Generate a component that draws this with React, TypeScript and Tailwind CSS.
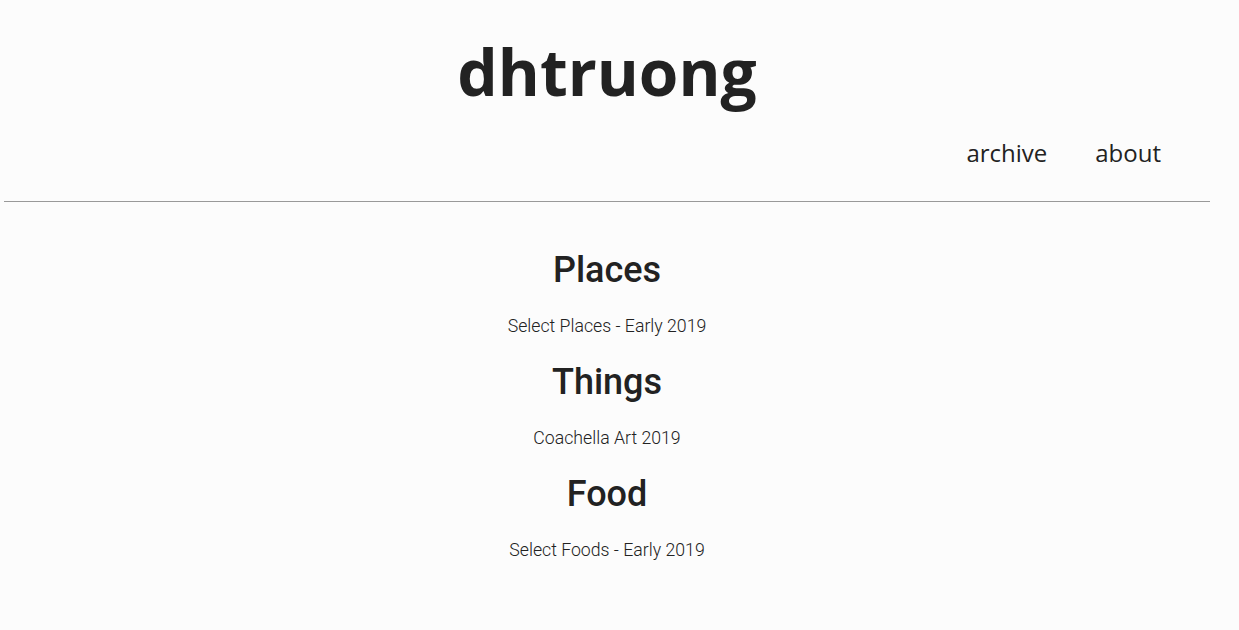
const sections = [
  { title: 'Places', sub: 'Select Places - Early 2019' },
  { title: 'Things', sub: 'Coachella Art 2019' },
  { title: 'Food', sub: 'Select Foods - Early 2019' },
];

export default function App() {
  return (
    <div className="min-h-[630px] bg-[#fcfcfc] text-[#222]">
      <div className="ml-[4px] w-[1206px]">
        <header className="border-b border-[#999]">
          <h1 className="pt-[27px] text-center text-[64px] font-bold leading-[90px] font-['Open_Sans',sans-serif]">
            dhtruong
          </h1>
          <nav className="flex justify-end gap-[48px] pr-[49px] pt-[16px] pb-[28px] text-[24px] leading-[40px] font-['Open_Sans',sans-serif]">
            <a href="#">archive</a>
            <a href="#">about</a>
          </nav>
        </header>
        <main className="pt-[40px] text-center font-['Roboto',sans-serif]">
          {sections.map(s => (
            <section key={s.title}>
              <h2 className="text-[36px] font-medium leading-[56px]">{s.title}</h2>
              <p className="text-[17.7px] font-light leading-[56px]">{s.sub}</p>
            </section>
          ))}
        </main>
      </div>
    </div>
  );
}
